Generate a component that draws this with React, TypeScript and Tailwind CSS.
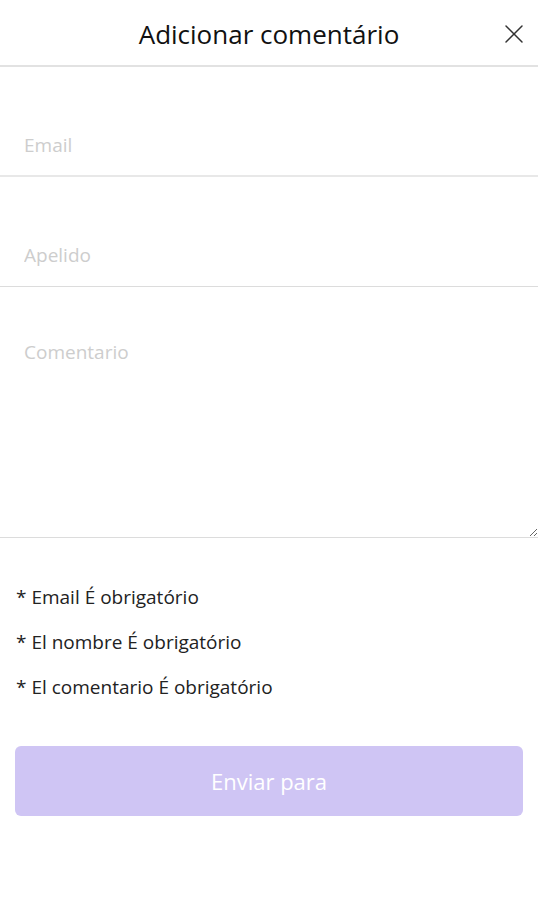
import { X } from 'lucide-react';

const font = { fontFamily: '"Open Sans", "Noto Sans", sans-serif' };

export default function App() {
  return (
    <div className="w-[538px] min-h-[900px] bg-white text-[#1a1a1a]" style={font}>
      {/* Header */}
      <div className="relative h-[67px] flex items-center justify-center border-b-2 border-[#e2e2e2]">
        <h1 className="text-[26px] leading-none text-[#111] pt-[2px]">Adicionar comentário</h1>
        <button className="absolute right-[8px] top-[18px] text-[#333]">
          <X className="w-[32px] h-[32px]" strokeWidth={1.1} />
        </button>
      </div>

      {/* Fields */}
      <div className="h-[110px] flex items-end border-b-2 border-[#e8e8e8] px-[24px] pb-[16px]">
        <input
          className="w-full outline-none text-[19px] placeholder:text-[#cdcdcd]"
          placeholder="Email"
        />
      </div>
      <div className="h-[110px] flex items-end border-b border-[#dcdcdc] px-[24px] pb-[17px]">
        <input
          className="w-full outline-none text-[19px] placeholder:text-[#cdcdcd]"
          placeholder="Apelido"
        />
      </div>
      <div className="h-[251px] border-b border-[#dcdcdc] flex">
        <textarea
          className="w-full h-full outline-none resize-y px-[24px] pt-[51px] text-[19px] placeholder:text-[#cdcdcd]"
          placeholder="Comentario"
        />
      </div>

      {/* Required notes */}
      <div className="px-[16px] pt-[46px] flex flex-col gap-[19px] text-[19px] leading-[26px] text-[#222]">
        <p>* Email É obrigatório</p>
        <p>* El nombre É obrigatório</p>
        <p>* El comentario É obrigatório</p>
      </div>

      <div className="px-[15px] pt-[46px]">
        <button
          disabled
          className="w-full h-[70px] rounded-[6px] bg-[#cfc5f4] text-white text-[22px]"
        >
          Enviar para
        </button>
      </div>
    </div>
  );
}
